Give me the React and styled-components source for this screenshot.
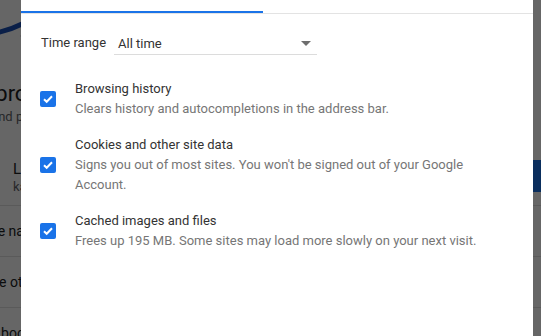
import React from 'react';
import styled, { createGlobalStyle } from 'styled-components';

const GlobalStyle = createGlobalStyle`
    html, body {
        margin: 0;
        padding: 0;
        overflow: hidden;
    }
    body {
        font-family: Roboto, "Liberation Sans", Arial, sans-serif;
    }
`;

const Screen = styled.div`
    position: relative;
    width: 541px;
    height: 336px;
    overflow: hidden;
    background: #ffffff;
`;

// settings page that sits behind the modal
const Behind = styled.div`
    display: flex;
    flex-direction: column;
    width: 620px;
    margin-left: -60px;
    color: #202124;
`;

const Banner = styled.div`
    height: 61px;
    display: flex;
    align-items: flex-start;
    padding-left: 20px;
`;

const Heading = styled.div`
    padding: 20px 0 0 30px;
    font-size: 22px;
    line-height: 26px;
`;

const SubHeading = styled.div`
    padding-left: 20px;
    font-size: 13px;
    line-height: 20px;
    color: #5f6368;
`;

const AccountRow = styled.div`
    display: flex;
    justify-content: space-between;
    align-items: center;
    height: 58px;
    margin-top: 20px;
    padding-left: 73px;
    border-bottom: 1px solid #e0e0e0;
    .name {
        font-size: 15px;
        line-height: 20px;
    }
    .mail {
        font-size: 13px;
        color: #5f6368;
    }
`;

const SyncButton = styled.div`
    width: 80px;
    height: 32px;
    background: #1a73e8;
    color: #ffffff;
    font-size: 13px;
    line-height: 32px;
    padding-left: 6px;
`;

const BehindRow = styled.div`
    height: 50px;
    display: flex;
    align-items: center;
    padding-left: 16px;
    font-size: 14px;
    border-bottom: 1px solid #e0e0e0;
`;

const Overlay = styled.div`
    position: absolute;
    inset: 0;
    background: rgba(0, 0, 0, 0.6);
`;

const Dialog = styled.div`
    position: absolute;
    left: 21px;
    top: -34px;
    width: 512px;
    height: 400px;
    background: #ffffff;
    color: #333333;
`;

const Tabs = styled.div`
    display: flex;
    height: 47px;
    border-bottom: 1px solid #e3e3e3;
`;

const Tab = styled.div`
    width: ${p => p.width}px;
    display: flex;
    align-items: center;
    justify-content: center;
    font-size: 13px;
    font-weight: 500;
    color: ${p => (p.active ? '#1a73e8' : '#5f6368')};
    box-shadow: ${p => (p.active ? 'inset 0 -2px 0 #1a73e8' : 'none')};
`;

const Body = styled.div`
    padding: 19px 20px 0 19px;
`;

const RangeRow = styled.div`
    display: flex;
    align-items: flex-start;
    padding-left: 1px;
    font-size: 13px;
    color: #333333;
`;

const RangeLabel = styled.div`
    line-height: 20px;
    width: 73px;
`;

const Select = styled.div`
    width: 193px;
    height: 20px;
    padding: 0 6px 1px 4px;
    display: flex;
    align-items: center;
    justify-content: space-between;
    border-bottom: 1px solid #dcdcdc;
`;

const Arrow = styled.span`
    width: 0;
    height: 0;
    border-left: 5px solid transparent;
    border-right: 5px solid transparent;
    border-top: 5px solid #6e6e6e;
    margin-top: 1px;
`;

const Options = styled.div`
    display: flex;
    flex-direction: column;
    gap: 16px;
    margin-top: 24px;
`;

const Option = styled.div`
    display: flex;
    align-items: center;
    gap: 19px;
`;

const Box = styled.div`
    flex: none;
    width: 16px;
    height: 16px;
    border-radius: 2px;
    background: #1a73e8;
    display: flex;
    align-items: center;
    justify-content: center;
`;

const Texts = styled.div`
    display: flex;
    flex-direction: column;
    font-size: 13px;
    line-height: 20px;
`;

const Title = styled.div`
    color: #333333;
`;

const Desc = styled.div`
    color: #767676;
    max-width: 420px;
`;

const Check = () => (
    <Box>
        <svg width="12" height="12" viewBox="0 0 12 12">
            <path d="M2 6.2 L4.7 8.8 L10 3.3" fill="none" stroke="#ffffff" strokeWidth="2" />
        </svg>
    </Box>
);

const items = [
    {
        title: 'Browsing history',
        desc: 'Clears history and autocompletions in the address bar.',
    },
    {
        title: 'Cookies and other site data',
        desc: "Signs you out of most sites. You won't be signed out of your Google Account.",
    },
    {
        title: 'Cached images and files',
        desc: 'Frees up 195 MB. Some sites may load more slowly on your next visit.',
    },
];

const App = () => {
    return (
        <>
            <GlobalStyle />
            <Screen>
                <Behind>
                    <Banner>
                        <svg width="80" height="48" viewBox="0 0 80 48">
                            <path d="M0 30 Q30 40 62 24" fill="none" stroke="#1a4fb3" strokeWidth="5" />
                            <path d="M76 0 V36 H60" fill="none" stroke="#cfcfcf" strokeWidth="1" />
                        </svg>
                    </Banner>
                    <Heading>Improve Chrome</Heading>
                    <SubHeading>Sync and personalize Chrome across devices</SubHeading>
                    <AccountRow>
                        <div>
                            <div className="name">Lisa</div>
                            <div className="mail">karen@example.com</div>
                        </div>
                        <SyncButton>Sync</SyncButton>
                    </AccountRow>
                    <BehindRow>Chrome name and picture</BehindRow>
                    <BehindRow>Manage other people</BehindRow>
                    <BehindRow>Import bookmarks and settings</BehindRow>
                </Behind>
                <Overlay />
                <Dialog>
                    <Tabs>
                        <Tab width={242} active>Basic</Tab>
                        <Tab width={242}>Advanced</Tab>
                    </Tabs>
                    <Body>
                        <RangeRow>
                            <RangeLabel>Time range</RangeLabel>
                            <Select>
                                <span>All time</span>
                                <Arrow />
                            </Select>
                        </RangeRow>
                        <Options>
                            {items.map(item => (
                                <Option key={item.title}>
                                    <Check />
                                    <Texts>
                                        <Title>{item.title}</Title>
                                        <Desc>{item.desc}</Desc>
                                    </Texts>
                                </Option>
                            ))}
                        </Options>
                    </Body>
                </Dialog>
            </Screen>
        </>
    );
};

export default App;
